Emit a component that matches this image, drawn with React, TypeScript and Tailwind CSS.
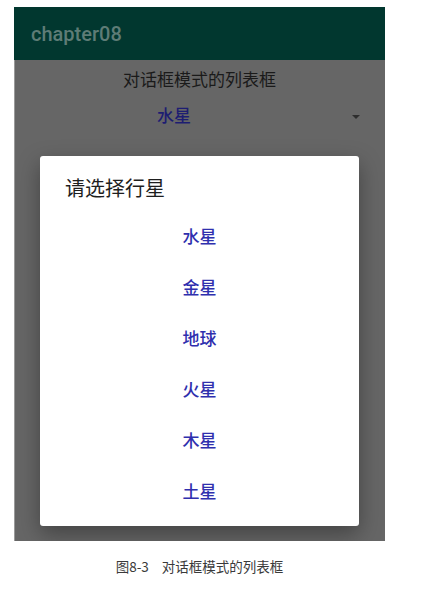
import React from 'react'

const planets = ['水星', '金星', '地球', '火星', '木星', '土星']

const cjk = { fontFamily: 'Roboto, "Noto Sans CJK SC", sans-serif' }

export default function App() {
  return (
    <div className="min-h-[600px] w-[437px] bg-white pt-[7px]" style={cjk}>
      <div className="ml-[14px] w-[371px]">
        {/* phone screen */}
        <div className="flex h-[534px] flex-col overflow-hidden bg-[#666666] shadow-[inset_1px_0_0_#9a9a9a]">
          <div className="flex h-[53px] shrink-0 items-center bg-[#01372f] px-[17px]">
            <span className="text-[20px] font-medium leading-none text-[#5e7c76]">chapter08</span>
          </div>

          <div className="relative flex-1">
            <div className="pt-[8px] text-center text-[17px] leading-[24px] text-[#1a1a1a]">
              对话框模式的列表框
            </div>
            <div className="mt-[1px] flex h-[48px] items-center">
              <div className="w-[320px] text-center text-[17px] font-medium text-[#1d1d72]">水星</div>
              <div className="ml-[18px] h-0 w-0 border-x-[4px] border-t-[4px] border-x-transparent border-t-[#2e2e2e]" />
            </div>

            {/* dialog */}
            <div className="absolute left-[26px] top-[96px] h-[370px] w-[319px] rounded-[3px] bg-white pt-[19px] pb-[8px] shadow-[0_8px_22px_rgba(0,0,0,0.35)]">
              <div className="h-[28px] pl-[25px] text-[20px] leading-[28px] text-[#1e1e1e]">请选择行星</div>
              <div className="mt-[9px]">
                {planets.map((p) => (
                  <div key={p} className="flex h-[51px] items-center justify-center text-[17px] font-medium text-[#2f2fae]">
                    {p}
                  </div>
                ))}
              </div>
            </div>
          </div>
        </div>

        <div
          className="mt-[15px] text-center text-[13.5px] leading-[20px] text-[#3a3a3a]"
          style={{ fontFamily: '"Noto Sans CJK SC", sans-serif' }}
        >
          <span className="mr-[13px]">图8-3</span>
          对话框模式的列表框
        </div>
      </div>
    </div>
  )
}
